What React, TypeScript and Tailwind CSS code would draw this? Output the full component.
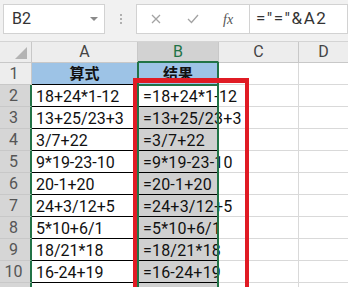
import React from "react";

const rows = [
  "18+24*1-12",
  "13+25/23+3",
  "3/7+22",
  "9*19-23-10",
  "20-1+20",
  "24+3/12+5",
  "5*10+6/1",
  "18/21*18",
  "16-24+19",
];

const cellFont = { fontFamily: "Roboto, 'Noto Sans CJK SC', sans-serif" };

function RowHeader({ n, selected }: { n: string; selected: boolean }) {
  return (
    <div
      className={`w-[32px] h-full flex items-center justify-center pr-[3px] text-[16px] text-[#555] border-b border-[#c8c8c8] ${
        selected ? "bg-[#d6d6d6] border-r-2 border-r-[#217346]" : "bg-[#ededed] border-r border-r-[#c8c8c8]"
      }`}
    >
      {n}
    </div>
  );
}

export default function App() {
  return (
    <div className="relative w-[348px] h-[287px] overflow-hidden bg-white" style={cellFont}>
      {/* toolbar */}
      <div className="h-[42px] bg-[#f1f1f1] flex items-start pt-[4px] border-b border-[#d4d4d4]">
        <div className="ml-[3px] w-[102px] h-[30px] bg-white border border-[#d2d2d2] flex items-center pl-[8px] pr-[6px]">
          <span className="text-[16px] text-[#333] flex-1">B2</span>
          <span className="w-0 h-0 border-l-[4px] border-r-[4px] border-t-[4px] border-l-transparent border-r-transparent border-t-[#8a8a8a]" />
        </div>
        <div className="w-[31px] h-[30px] flex flex-col items-center justify-center gap-[2px]">
          <span className="w-[2px] h-[2px] bg-[#b0b0b0]" />
          <span className="w-[2px] h-[2px] bg-[#b0b0b0]" />
          <span className="w-[2px] h-[2px] bg-[#b0b0b0]" />
        </div>
        <div className="w-[113px] h-[30px] bg-white border border-[#d2d2d2] border-r-0 flex items-center">
          <svg width="10" height="10" viewBox="0 0 10 10" className="ml-[14px]">
            <path d="M1 1 L9 9 M9 1 L1 9" stroke="#a3a3a3" strokeWidth="1.3" fill="none" />
          </svg>
          <svg width="12" height="10" viewBox="0 0 12 10" className="ml-[26px]">
            <path d="M1 5 L4.5 8.5 L11 1" stroke="#a3a3a3" strokeWidth="1.3" fill="none" />
          </svg>
          <span
            className="ml-[24px] text-[14px] italic text-[#555]"
            style={{ fontFamily: "'Liberation Serif', serif" }}
          >
            fx
          </span>
        </div>
        <div className="flex-1 h-[30px] bg-white border border-[#d2d2d2] flex items-center pl-[6px]">
          <span className="text-[17px] text-[#333] tracking-[1.5px]">="="&amp;A2</span>
        </div>
      </div>

      {/* column headers */}
      <div className="flex h-[21px] bg-[#ededed] text-[16px] text-[#444]">
        <div className="w-[32px] h-full border-r border-b border-[#c8c8c8] relative">
          <svg width="12" height="12" className="absolute right-[4px] bottom-[3px]">
            <path d="M12 0 L12 12 L0 12 Z" fill="#b4b4b4" />
          </svg>
        </div>
        <div className="w-[106px] h-full flex items-center justify-center border-r border-b border-[#c8c8c8]">A</div>
        <div className="w-[81px] h-full flex items-center justify-center bg-[#d2d2d2] text-[#217346] border-r border-r-[#c8c8c8] border-b-2 border-b-[#217346]">B</div>
        <div className="w-[80px] h-full flex items-center justify-center border-r border-b border-[#c8c8c8]">C</div>
        <div className="flex-1 h-full flex items-center justify-center border-b border-[#c8c8c8]">D</div>
      </div>

      {/* row 1 */}
      <div className="flex h-[22px]">
        <RowHeader n="1" selected={false} />
        <div
          className="w-[106px] h-full bg-[#9dc3e6] border-r border-b border-black flex items-center justify-center text-[15px] font-bold text-[#111]"
          style={{ fontFamily: "'Noto Sans CJK SC', sans-serif" }}
        >
          算式
        </div>
        <div
          className="w-[81px] h-full bg-[#9dc3e6] border-r border-b border-black flex items-center justify-center text-[15px] font-bold text-[#111]"
          style={{ fontFamily: "'Noto Sans CJK SC', sans-serif" }}
        >
          结果
        </div>
        <div className="w-[80px] h-full border-r border-b border-[#d9d9d9]" />
        <div className="flex-1 h-full border-b border-[#d9d9d9]" />
      </div>

      {rows.map((r, i) => (
        <div key={i} className="flex h-[22px]">
          <RowHeader n={String(i + 2)} selected />
          <div className="w-[106px] h-full border-r border-b border-black flex items-center pl-[4px] pt-[2px] text-[16px] text-[#111] whitespace-nowrap">
            {r}
          </div>
          <div
            className={`relative z-10 w-[81px] h-full border-r border-b border-black flex items-center pl-[5px] pt-[2px] text-[16px] tracking-[0.2px] text-[#111] whitespace-nowrap overflow-visible ${
              i === 0 ? "bg-white" : "bg-[#d0d0d0]"
            }`}
          >
            {"=" + r}
          </div>
          <div className="w-[80px] h-full border-r border-b border-[#d9d9d9]" />
          <div className="flex-1 h-full border-b border-[#d9d9d9]" />
        </div>
      ))}

      {/* row 11 partial */}
      <div className="flex h-[22px]">
        <RowHeader n="" selected />
        <div className="w-[106px] h-full border-r border-black" />
        <div className="w-[81px] h-full bg-[#d0d0d0] border-r border-black" />
        <div className="w-[80px] h-full border-r border-[#d9d9d9]" />
        <div className="flex-1 h-full" />
      </div>

      {/* green selection */}
      <div className="absolute z-20 left-[137px] top-[84px] w-[82px] h-[220px] border-2 border-[#217346] pointer-events-none" />
      <div className="absolute z-20 left-[137px] top-[62px] w-[82px] h-[23px] border-x-2 border-[#217346] pointer-events-none" />

      {/* red highlight */}
      <div className="absolute z-30 left-[133px] top-[78px] w-[116px] h-[230px] border-4 border-t-[5px] border-[#e01b24] pointer-events-none" />
    </div>
  );
}
